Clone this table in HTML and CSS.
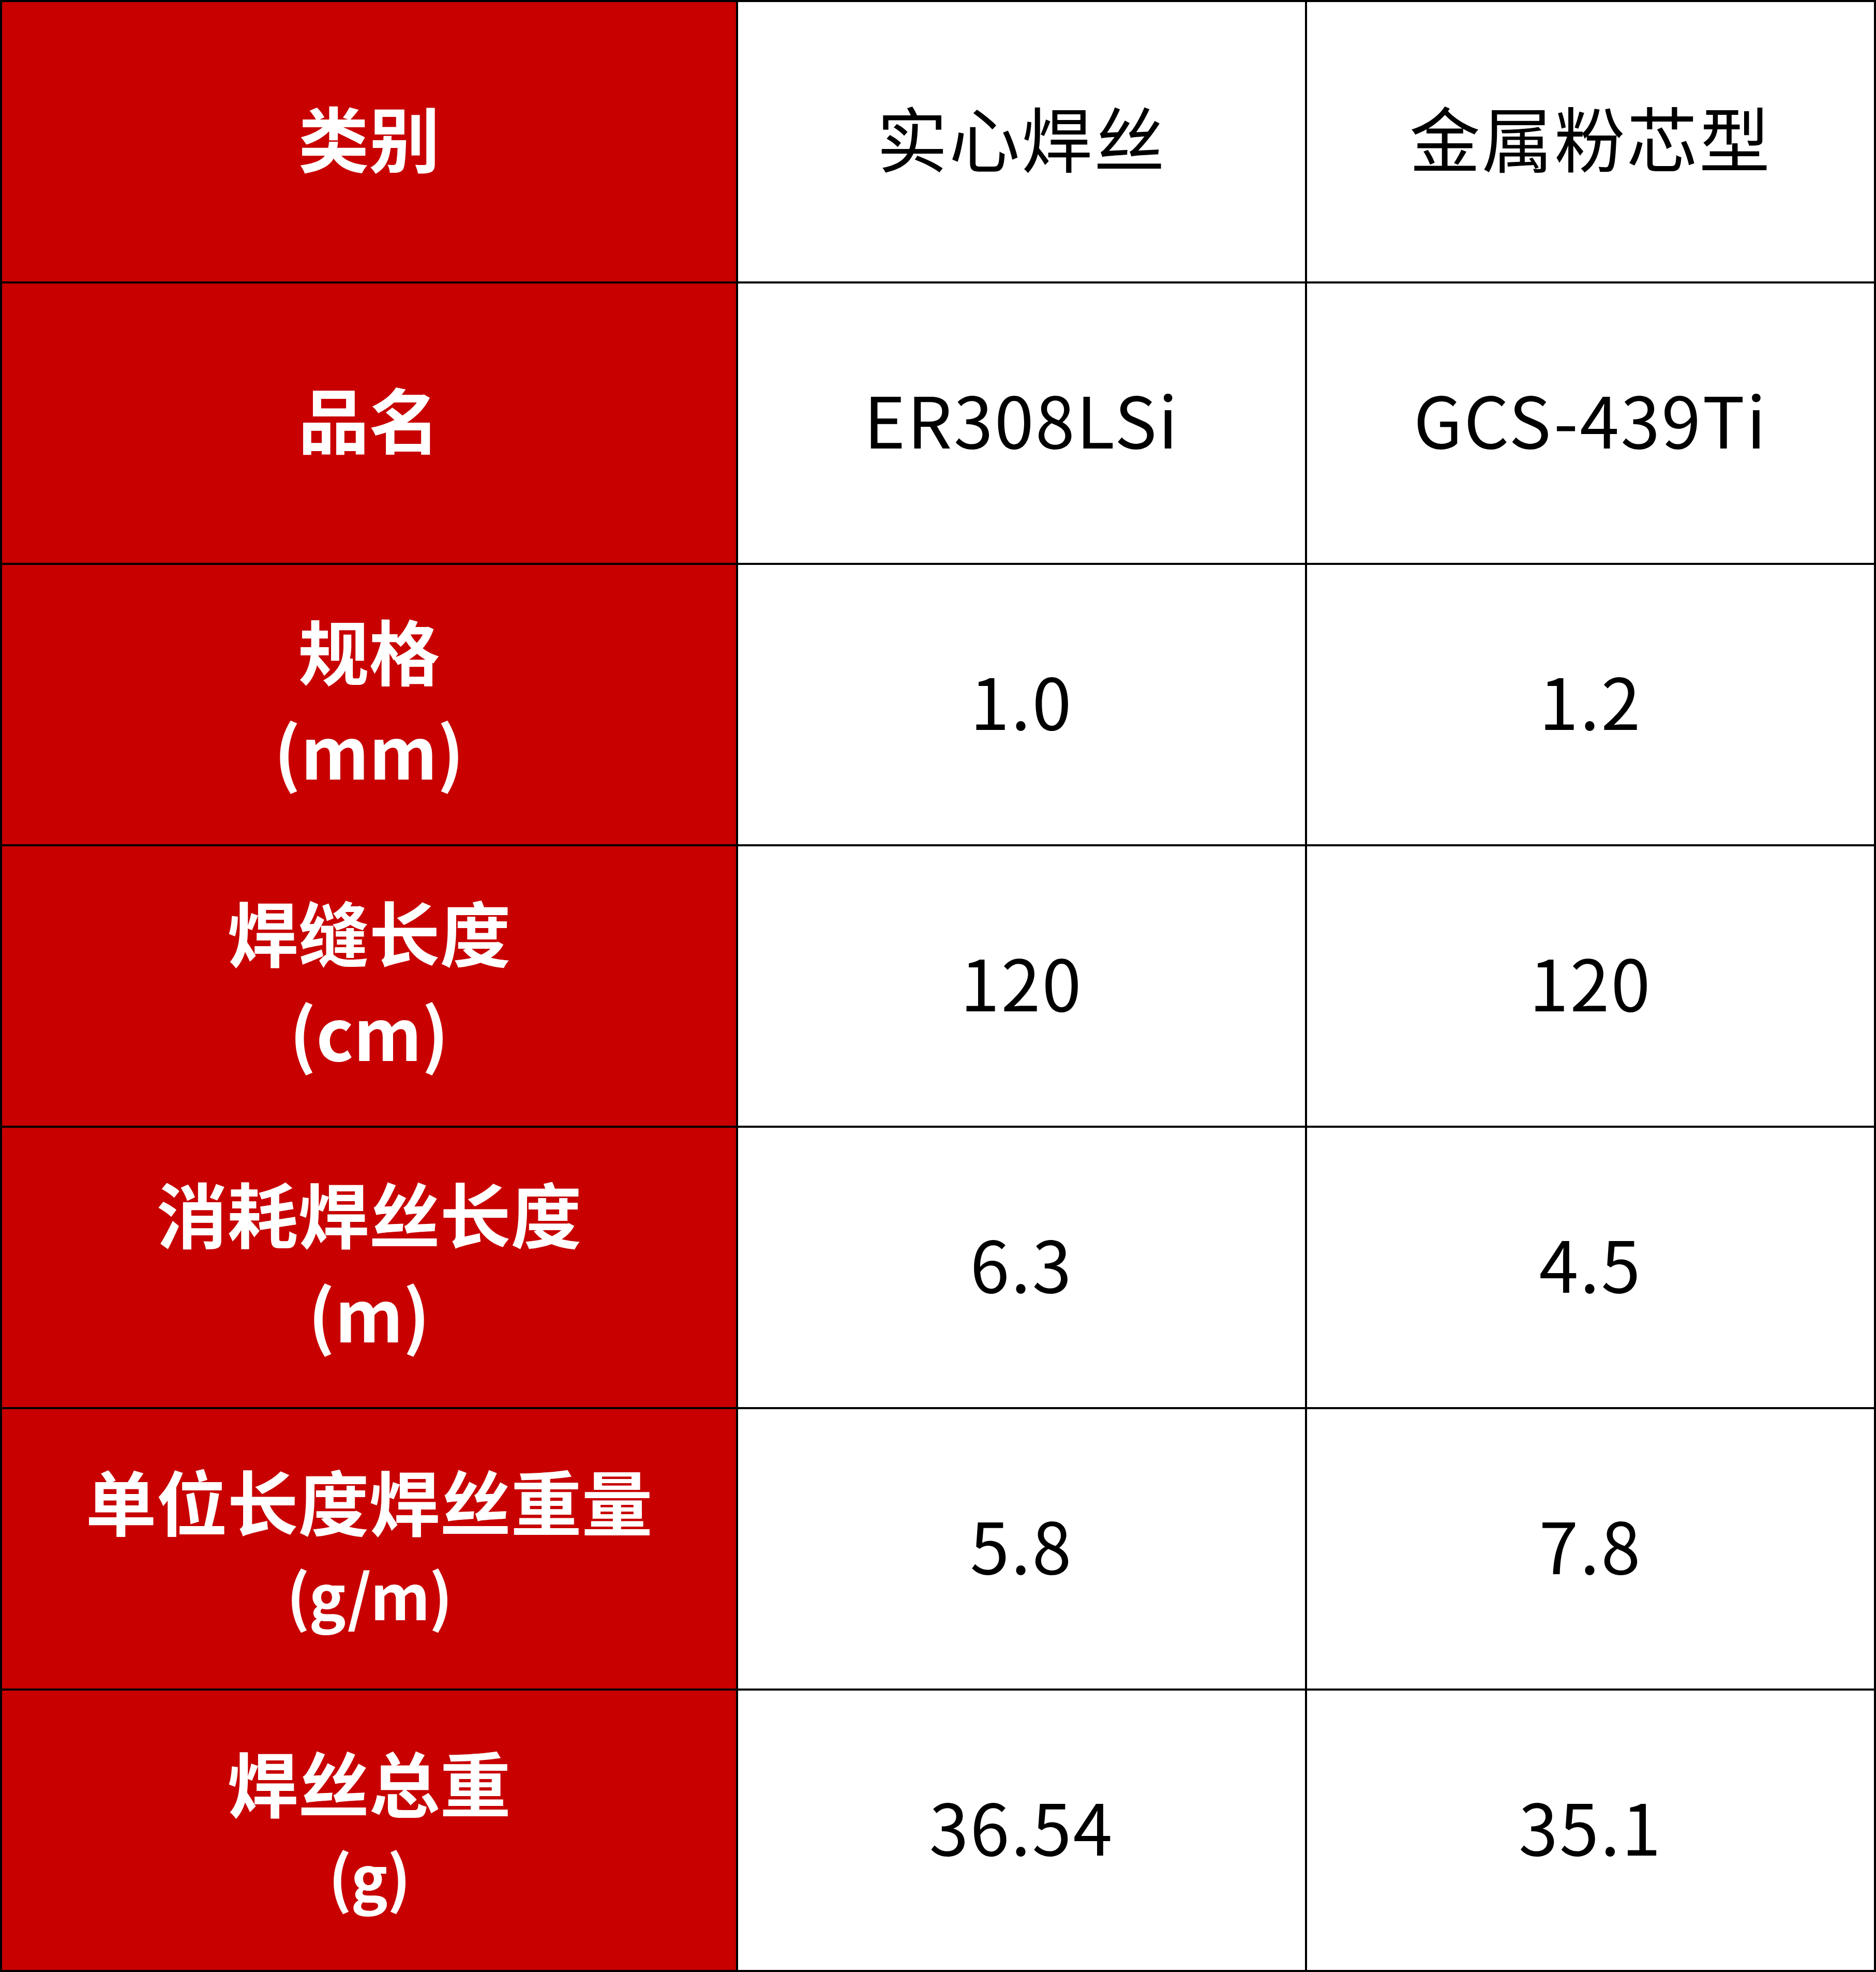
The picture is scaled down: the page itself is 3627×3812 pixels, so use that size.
FILE: index.html
```html
<!DOCTYPE html>
<html lang="zh-CN">
<head>
<meta charset="utf-8">
<title>焊丝对比</title>
<link rel="stylesheet" href="styles.css">
</head>
<body>
<div class="table">
  <div class="cell head"><span class="line">类别</span></div>
  <div class="cell">实心焊丝</div>
  <div class="cell">金属粉芯型</div>

  <div class="cell head"><span class="line">品名</span></div>
  <div class="cell">ER308LSi</div>
  <div class="cell">GCS-439Ti</div>

  <div class="cell head"><span class="line">规格</span><span class="line">(mm)</span></div>
  <div class="cell">1.0</div>
  <div class="cell">1.2</div>

  <div class="cell head"><span class="line">焊缝长度</span><span class="line">(cm)</span></div>
  <div class="cell">120</div>
  <div class="cell">120</div>

  <div class="cell head"><span class="line">消耗焊丝长度</span><span class="line">(m)</span></div>
  <div class="cell">6.3</div>
  <div class="cell">4.5</div>

  <div class="cell head"><span class="line">单位长度焊丝重量</span><span class="line small">(g/m)</span></div>
  <div class="cell">5.8</div>
  <div class="cell">7.8</div>

  <div class="cell head"><span class="line">焊丝总重</span><span class="line small">(g)</span></div>
  <div class="cell">36.54</div>
  <div class="cell">35.1</div>
</div>
</body>
</html>
```

FILE: styles.css
```css
html, body {
  margin: 0;
  padding: 0;
  background: #ffffff;
}

.table {
  box-sizing: border-box;
  width: 3627px;
  height: 3812px;
  padding: 4px;
  background: #000000;
  display: grid;
  grid-template-columns: 1419px 1fr 1fr;
  grid-template-rows: repeat(7, 1fr);
  gap: 4px;
  font-family: "Noto Sans CJK SC", "Noto Sans", sans-serif;
  font-size: 137px;
  line-height: 1.4;
}

.cell {
  box-sizing: border-box;
  padding-bottom: 20px;
  background: #ffffff;
  color: #000000;
  display: flex;
  flex-direction: column;
  align-items: center;
  justify-content: center;
  text-align: center;
  font-weight: 400;
  letter-spacing: 3px;
}

.head {
  background: #c80000;
  color: #ffffff;
  font-weight: 700;
  letter-spacing: 0;
}

.line {
  display: block;
}

.small {
  font-size: 120px;
  letter-spacing: -2px;
}
```
